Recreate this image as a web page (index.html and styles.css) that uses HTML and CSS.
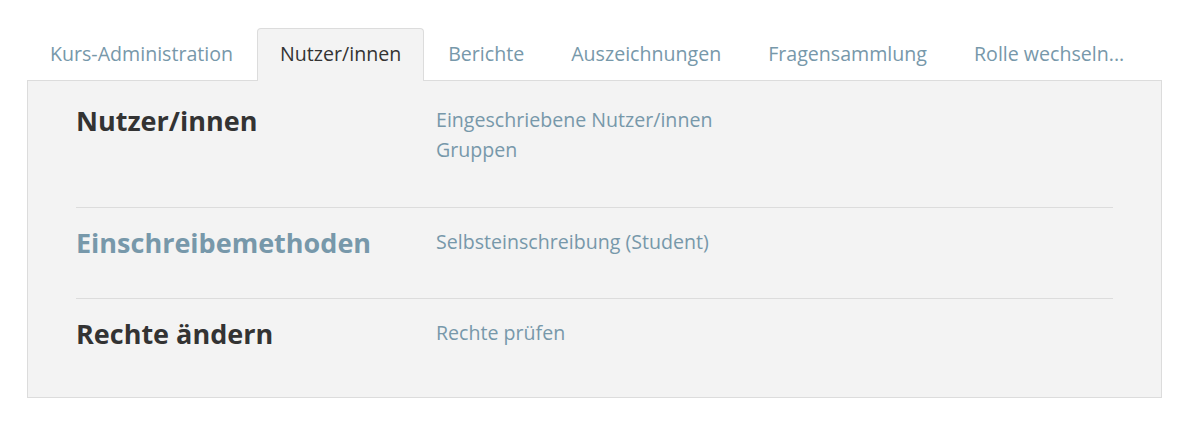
FILE: index.html
```html
<!DOCTYPE html>
<html lang="de">
  <head>
    <title>Nutzer/innen</title>
    <meta charset="utf-8">
    <link rel="stylesheet" href="styles.css">
  </head>
  <body>
    <div class="course-admin">
      <ul class="tabs">
        <li class="tab"><a href="#">Kurs-Administration</a></li>
        <li class="tab active"><a href="#">Nutzer/innen</a></li>
        <li class="tab"><a href="#">Berichte</a></li>
        <li class="tab"><a href="#">Auszeichnungen</a></li>
        <li class="tab"><a href="#">Fragensammlung</a></li>
        <li class="tab"><a href="#">Rolle wechseln...</a></li>
      </ul>

      <div class="tab-pane">
        <div class="admin-row">
          <h4 class="row-title">Nutzer/innen</h4>
          <ul class="row-links">
            <li><a href="#">Eingeschriebene Nutzer/innen</a></li>
            <li><a href="#">Gruppen</a></li>
          </ul>
        </div>
        <div class="admin-row">
          <h4 class="row-title"><a href="#">Einschreibemethoden</a></h4>
          <ul class="row-links">
            <li><a href="#">Selbsteinschreibung (Student)</a></li>
          </ul>
        </div>
        <div class="admin-row">
          <h4 class="row-title">Rechte ändern</h4>
          <ul class="row-links">
            <li><a href="#">Rechte prüfen</a></li>
          </ul>
        </div>
      </div>
    </div>
  </body>
</html>
```

FILE: styles.css
```css
body {
  margin: 0;
  background: #fff;
  font-family: "Open Sans", "Noto Sans", sans-serif;
  color: #333;
}

a {
  color: #7798aa;
  text-decoration: none;
}

.course-admin {
  width: 1135px;
  padding: 28px 0 0 27px;
}

/* tab strip */
.tabs {
  display: flex;
  margin: 0;
  padding: 0;
  list-style: none;
  position: relative;
  z-index: 1;
}

.tab {
  margin: 0 1px -1px 0;
}

.tab a {
  display: block;
  padding: 0 22px;
  height: 52px;
  line-height: 50px;
  font-size: 19.6px;
  border: 1px solid transparent;
  border-bottom: none;
  border-radius: 4px 4px 0 0;
}

.tab.active a {
  color: #333;
  background: #f3f3f3;
  border-color: #dcdcdc;
}

/* content */
.tab-pane {
  background: #f3f3f3;
  border: 1px solid #dcdcdc;
  padding: 5px 48px 5px 48px;
}

.admin-row {
  display: grid;
  grid-template-columns: 360px 1fr;
  padding: 17px 0 37px;
  border-top: 1px solid #dcdcdc;
}

.admin-row:first-child {
  border-top: none;
  padding-bottom: 42px;
}

.admin-row:last-child {
  padding-bottom: 40px;
}

.row-title {
  margin: 0;
  font-size: 27px;
  line-height: 36px;
  font-weight: 700;
}

.row-links {
  margin: 0;
  padding: 2px 0 0;
  list-style: none;
  font-size: 19.6px;
  line-height: 30px;
}
```
